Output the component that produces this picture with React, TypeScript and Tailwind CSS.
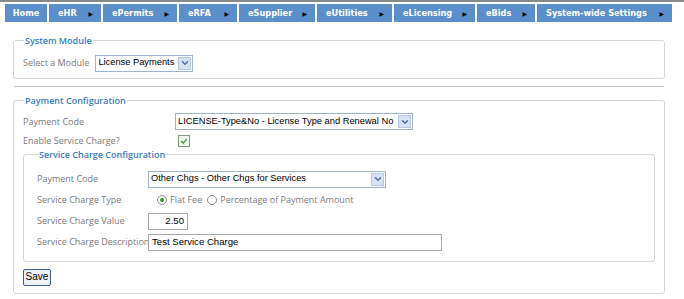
import { ChevronDown } from 'lucide-react'

const navItems = [
  { label: 'Home', w: 'w-[42px]', arrow: false },
  { label: 'eHR', w: 'w-[52px]', arrow: true },
  { label: 'ePermits', w: 'w-[74px]', arrow: true },
  { label: 'eRFA', w: 'w-[58px]', arrow: true },
  { label: 'eSupplier', w: 'w-[76px]', arrow: true },
  { label: 'eUtilities', w: 'w-[75px]', arrow: true },
  { label: 'eLicensing', w: 'w-[81px]', arrow: true },
  { label: 'eBids', w: 'w-[58px]', arrow: true },
  { label: 'System-wide Settings', w: 'w-[135px]', arrow: true },
]

function FakeSelect({ value, w }: { value: string; w: string }) {
  return (
    <div className={`${w} h-[17px] flex items-center border border-[#9fb3cc] bg-white pl-[2px] pr-[1px]`}>
      <span className="flex-1 whitespace-nowrap overflow-hidden text-[9.3px] text-black font-['Liberation_Sans',Arial,sans-serif] leading-none">
        {value}
      </span>
      <span className="w-[13px] h-[13px] flex items-center justify-center bg-[#d6e2f4] border border-[#b6c8e4]">
        <ChevronDown className="w-[10px] h-[10px] text-[#4d6f9e]" strokeWidth={3.5} />
      </span>
    </div>
  )
}

function TextBox({ value, w, right }: { value: string; w: string; right?: boolean }) {
  return (
    <div
      className={`${w} h-[17px] flex items-center border border-[#a9a9a9] bg-white px-[3px] text-[9.6px] text-black font-['Liberation_Sans',Arial,sans-serif] ${right ? 'justify-end' : ''}`}
    >
      {value}
    </div>
  )
}

export default function App() {
  return (
    <div className="w-[684px] h-[299px] bg-white border-t-2 border-[#8a8a8a] font-['Open_Sans',sans-serif] overflow-hidden">
      {/* top nav */}
      <div className="flex gap-[2px] pl-[5px] pt-[2px]">
        {navItems.map((n) => (
          <div
            key={n.label}
            className={`${n.w} h-[18px] bg-[#5a8fcb] flex items-center ${n.arrow ? 'justify-between pl-[9px] pr-[8px]' : 'justify-center'} text-white text-[8.2px] font-bold font-['DejaVu_Sans',Verdana,sans-serif]`}
          >
            <span>{n.label}</span>
            {n.arrow && <span className="text-black text-[6px]">▶</span>}
          </div>
        ))}
      </div>

      {/* System Module */}
      <fieldset className="ml-[13px] w-[652px] mt-[12px] border border-[#d6d6d6] rounded-[3px] pl-[9px] pb-[6px] pt-[7px]">
        <legend className="ml-[1px] px-[1px] text-[9px] font-semibold text-[#3b7bc2]">System Module</legend>
        <div className="flex items-center gap-[6px]">
          <span className="text-[9px] text-[#7a7a7a]">Select a Module</span>
          <FakeSelect value="License Payments" w="w-[98px]" />
        </div>
      </fieldset>

      <div className="ml-[14px] w-[650px] mt-[7px] border-t border-[#c8c8c8]" />

      {/* Payment Configuration */}
      <fieldset className="ml-[13px] w-[652px] mt-[7px] border border-[#d6d6d6] rounded-[3px] pl-[9px] pr-[9px] pb-[7px] pt-[6px]">
        <legend className="ml-[1px] px-[1px] text-[9px] font-semibold text-[#3b7bc2]">Payment Configuration</legend>
        <div className="grid grid-cols-[152px_1fr] items-center gap-y-[2px]">
          <span className="text-[9px] text-[#7a7a7a]">Payment Code</span>
          <FakeSelect value="LICENSE-Type&No - License Type and Renewal No" w="w-[238px]" />
          <span className="text-[9px] text-[#7a7a7a]">Enable Service Charge?</span>
          <div className="h-[17px] flex items-center pl-[3px]">
            <span className="w-[12px] h-[12px] border border-[#7d9c74] bg-[#f1f7ee] flex items-center justify-center">
              <svg viewBox="0 0 10 10" className="w-[8px] h-[8px]">
                <path d="M1.5 5.2 L4 7.6 L8.6 2.4" fill="none" stroke="#2f9a2f" strokeWidth="1.6" />
              </svg>
            </span>
          </div>
        </div>

        <fieldset className="border border-[#d6d6d6] rounded-[3px] pl-[13px] pb-[10px] pt-[9px] -mt-[1px]">
          <legend className="ml-[1px] px-[1px] text-[9px] font-semibold text-[#3b7bc2]">
            Service Charge Configuration
          </legend>
          <div className="grid grid-cols-[111px_1fr] items-center gap-y-[4px]">
            <span className="text-[9px] text-[#7a7a7a]">Payment Code</span>
            <FakeSelect value="Other Chgs - Other Chgs for Services" w="w-[238px]" />

            <span className="text-[9px] text-[#7a7a7a]">Service Charge Type</span>
            <div className="h-[17px] flex items-center gap-[3px] pl-[9px] text-[9px] text-[#7a7a7a]">
              <span className="w-[10px] h-[10px] rounded-full border border-[#8a8a8a] flex items-center justify-center bg-white">
                <span className="w-[4px] h-[4px] rounded-full bg-[#2f9a2f]" />
              </span>
              <span>Flat Fee</span>
              <span className="ml-[2px] w-[10px] h-[10px] rounded-full border border-[#8a8a8a] bg-white" />
              <span>Percentage of Payment Amount</span>
            </div>

            <span className="text-[9px] text-[#7a7a7a]">Service Charge Value</span>
            <TextBox value="2.50" w="w-[40px]" right />

            <span className="text-[9px] text-[#7a7a7a] whitespace-nowrap">Service Charge Description</span>
            <TextBox value="Test Service Charge" w="w-[294px]" />
          </div>
        </fieldset>

        <button className="mt-[7px] h-[17px] w-[28px] border border-[#3c5d8c] rounded-[2px] bg-[#eef1f6] text-[10px] text-black font-['Liberation_Sans',Arial,sans-serif] leading-none">
          Save
        </button>
      </fieldset>
    </div>
  )
}
